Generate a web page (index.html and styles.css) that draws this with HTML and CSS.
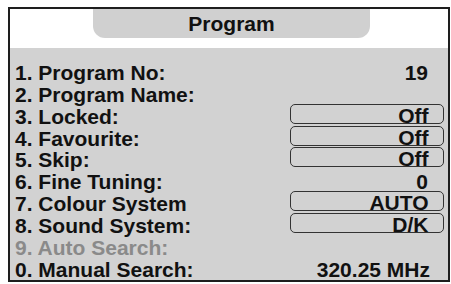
FILE: index.html
```html
<html>

<head>
    <meta name="viewport" content="width=device-width, initial-scale=1.0">
    <title>Program</title>
    <link rel="stylesheet" href="styles.css">
</head>

<body>
    <div class="frame">
        <div class="header">
            <div class="tab">Program</div>
        </div>
        <div class="menu">
            <div class="row"><span class="label">1. Program No:</span><span class="value">19</span></div>
            <div class="row"><span class="label">2. Program Name:</span><span class="value"></span></div>
            <div class="row"><span class="label">3. Locked:</span><span class="value box">Off</span></div>
            <div class="row"><span class="label">4. Favourite:</span><span class="value box">Off</span></div>
            <div class="row"><span class="label">5. Skip:</span><span class="value box">Off</span></div>
            <div class="row"><span class="label">6. Fine Tuning:</span><span class="value">0</span></div>
            <div class="row"><span class="label">7. Colour System</span><span class="value box">AUTO</span></div>
            <div class="row"><span class="label">8. Sound System:</span><span class="value box">D/K</span></div>
            <div class="row disabled"><span class="label">9. Auto Search:</span><span class="value"></span></div>
            <div class="row"><span class="label">0. Manual Search:</span><span class="value wide">320.25 MHz</span></div>
        </div>
    </div>
</body>

</html>
```

FILE: styles.css
```css
body {
    margin: 0;
    padding: 0;
    background-color: #fff;
}

.frame {
    margin: 7px 0 0 8px;
    width: 442px;
    height: 275px;
    box-sizing: border-box;
    border: 2px solid #1e1e1e;
    background-color: #d2d2d2;
    display: flex;
    flex-direction: column;
    overflow: hidden;
    font-family: "Liberation Sans", Arial, sans-serif;
    font-weight: bold;
    color: #111;
}

.header {
    height: 39px;
    flex-shrink: 0;
    background-color: #fff;
    display: flex;
    justify-content: center;
}

.tab {
    width: 277px;
    height: 29px;
    margin-left: 5px;
    background-color: #d0d0d0;
    border-radius: 0 0 12px 12px;
    text-align: center;
    font-size: 21px;
    line-height: 29px;
}

.menu {
    padding: 14px 4px 0 4px;
}

.row {
    display: flex;
    justify-content: space-between;
    height: 21.85px;
    font-size: 21px;
    line-height: 22px;
}

.label {
    padding-left: 1px;
}

.value {
    width: 154px;
    height: 20px;
    box-sizing: border-box;
    margin-top: -2px;
    padding-right: 16px;
    text-align: right;
    line-height: 26px;
}

.box {
    border: 1.5px solid #333;
    border-radius: 5px;
    padding-right: 14.5px;
    line-height: 21px;
}

.wide {
    padding-right: 14px;
}

.disabled {
    color: #8a8a8a;
}
```
